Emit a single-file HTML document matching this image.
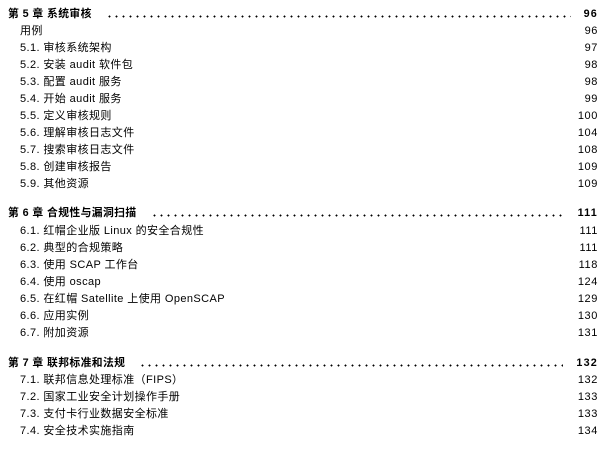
<!DOCTYPE html>
<html><head><meta charset="utf-8"><style>
body{margin:0;width:607px;height:452px;background:#fff;font-family:"Liberation Sans","Noto Sans CJK SC",sans-serif;color:#000;position:relative;overflow:hidden}
.r{position:absolute;left:20px;right:9px;height:17px;line-height:17px;font-size:11px;display:flex}
.r .t{flex:0 0 auto;letter-spacing:0.4px}
.r .n{margin-left:auto;letter-spacing:0.6px}
.h{left:8px;font-weight:bold;font-size:10.8px}
.h .d{flex:1;margin:0 13px 0 14px;height:17px;background:radial-gradient(circle,#000 0.8px,transparent 1.1px) 0 9px/7px 3px repeat-x}
.h .n{margin-left:0;letter-spacing:1.2px}
</style></head><body>
<div class="r h" style="top:6px"><span class="t">第 5 章 系统审核</span><span class="d"></span><span class="n">96</span></div>
<div class="r" style="top:23px"><span class="t">用例</span><span class="n">96</span></div>
<div class="r" style="top:40px"><span class="t">5.1. 审核系统架构</span><span class="n">97</span></div>
<div class="r" style="top:57px"><span class="t">5.2. 安装 audit 软件包</span><span class="n">98</span></div>
<div class="r" style="top:74px"><span class="t">5.3. 配置 audit 服务</span><span class="n">98</span></div>
<div class="r" style="top:91px"><span class="t">5.4. 开始 audit 服务</span><span class="n">99</span></div>
<div class="r" style="top:108px"><span class="t">5.5. 定义审核规则</span><span class="n">100</span></div>
<div class="r" style="top:125px"><span class="t">5.6. 理解审核日志文件</span><span class="n">104</span></div>
<div class="r" style="top:142px"><span class="t">5.7. 搜索审核日志文件</span><span class="n">108</span></div>
<div class="r" style="top:159px"><span class="t">5.8. 创建审核报告</span><span class="n">109</span></div>
<div class="r" style="top:176px"><span class="t">5.9. 其他资源</span><span class="n">109</span></div>

<div class="r h" style="top:205px"><span class="t">第 6 章 合规性与漏洞扫描</span><span class="d"></span><span class="n">111</span></div>
<div class="r" style="top:223px"><span class="t">6.1. 红帽企业版 Linux 的安全合规性</span><span class="n">111</span></div>
<div class="r" style="top:240px"><span class="t">6.2. 典型的合规策略</span><span class="n">111</span></div>
<div class="r" style="top:257px"><span class="t">6.3. 使用 SCAP 工作台</span><span class="n">118</span></div>
<div class="r" style="top:274px"><span class="t">6.4. 使用 oscap</span><span class="n">124</span></div>
<div class="r" style="top:291px"><span class="t">6.5. 在红帽 Satellite 上使用 OpenSCAP</span><span class="n">129</span></div>
<div class="r" style="top:308px"><span class="t">6.6. 应用实例</span><span class="n">130</span></div>
<div class="r" style="top:325px"><span class="t">6.7. 附加资源</span><span class="n">131</span></div>

<div class="r h" style="top:355px"><span class="t">第 7 章 联邦标准和法规</span><span class="d"></span><span class="n">132</span></div>
<div class="r" style="top:372px"><span class="t">7.1. 联邦信息处理标准（FIPS）</span><span class="n">132</span></div>
<div class="r" style="top:389px"><span class="t">7.2. 国家工业安全计划操作手册</span><span class="n">133</span></div>
<div class="r" style="top:406px"><span class="t">7.3. 支付卡行业数据安全标准</span><span class="n">133</span></div>
<div class="r" style="top:423px"><span class="t">7.4. 安全技术实施指南</span><span class="n">134</span></div>
</body></html>
